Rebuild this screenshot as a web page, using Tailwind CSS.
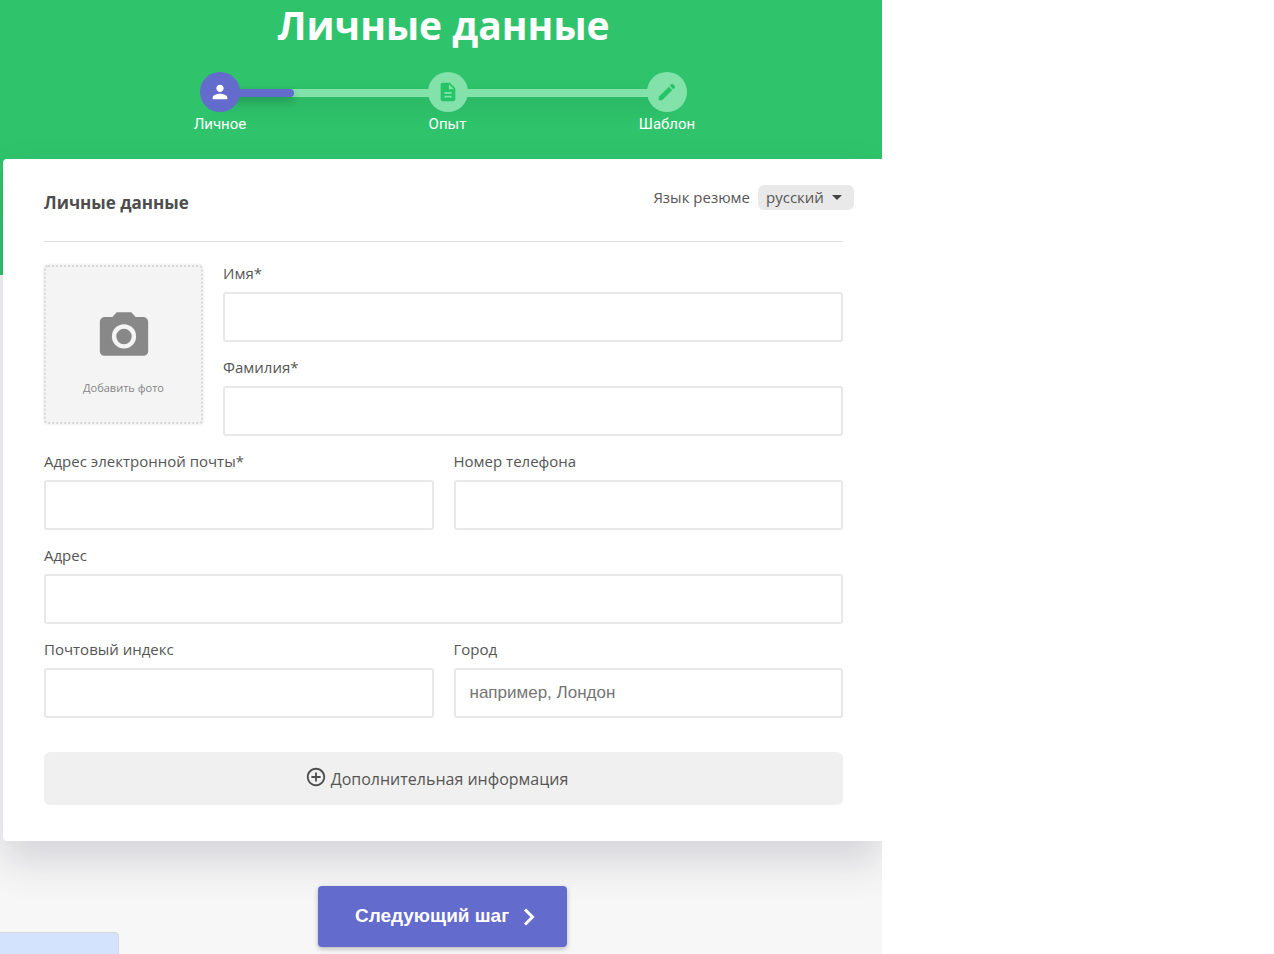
<!DOCTYPE html>
<html lang="ru">
<head>
<meta charset="utf-8">
<meta name="viewport" content="width=device-width, initial-scale=1">
<title>Личные данные</title>
<script src="https://cdn.jsdelivr.net/npm/@tailwindcss/browser@4"></script>
</head>
<body class="bg-white font-['Open_Sans','Noto_Sans',sans-serif] text-[15px] text-[#555]">
<div class="relative min-h-screen w-full max-w-[882px] overflow-hidden bg-[linear-gradient(#2fc46c_275px,#f7f7f7_275px)] pl-[3px] pb-2">
  <header class="flex flex-col items-center pl-0.5 text-white">
    <h1 class="text-[39px] leading-[50px] font-bold">Личные данные</h1>
    <nav class="relative mt-[22px] w-full max-w-[503px]" aria-label="Шаги">
      <div class="absolute inset-x-7 top-[17px] h-2 bg-[#83e2aa] shadow-[0_10px_20px_rgba(0,0,0,0.15)]">
        <div class="h-full w-[74px] rounded-r-full bg-[#636bcd] shadow-[0_4px_8px_rgba(0,0,0,0.2)]"></div>
      </div>
      <ol class="relative flex justify-between font-[Roboto,sans-serif] text-[15px] leading-5">
        <li class="flex w-14 flex-col items-center gap-0.5">
          <span class="flex size-10 items-center justify-center rounded-full bg-[#636bcd]">
            <svg class="size-[22px]" viewBox="0 0 24 24" fill="#fff"><path d="M12 12c2.21 0 4-1.79 4-4s-1.79-4-4-4-4 1.79-4 4 1.79 4 4 4zm0 2c-2.67 0-8 1.34-8 4v2h16v-2c0-2.66-5.33-4-8-4z"/></svg>
          </span>
          <span>Личное</span>
        </li>
        <li class="ml-2 flex w-14 flex-col items-center gap-0.5">
          <span class="flex size-10 items-center justify-center rounded-full bg-[#83e2aa]">
            <svg class="size-[22px]" viewBox="0 0 24 24" fill="#25c467"><path d="M14 2H6c-1.1 0-1.99.9-1.99 2L4 20c0 1.1.89 2 1.99 2H18c1.1 0 2-.9 2-2V8l-6-6zm2 16H8v-2h8v2zm0-4H8v-2h8v2zm-3-5V3.500L18.500 9H13z"/></svg>
          </span>
          <span>Опыт</span>
        </li>
        <li class="flex w-14 flex-col items-center gap-0.5">
          <span class="flex size-10 items-center justify-center rounded-full bg-[#83e2aa]">
            <svg class="size-[22px]" viewBox="0 0 24 24" fill="#25c467"><path d="M3 17.250V21h3.750L17.810 9.940l-3.750-3.750L3 17.250zM20.710 7.040c.39-.39.39-1.020 0-1.410l-2.340-2.340c-.39-.39-1.020-.39-1.410 0l-1.830 1.830 3.750 3.750 1.830-1.830z"/></svg>
          </span>
          <span>Шаблон</span>
        </li>
      </ol>
    </nav>
  </header>

  <form>
    <div class="mt-[25px] rounded-l bg-white pr-[39px] pb-9 pl-[41px] shadow-[0_20px_40px_rgba(30,30,60,0.16)]">
      <div class="flex h-[83px] items-start justify-between border-b border-[#dedede] pt-[26px]">
        <h2 class="pt-1.5 text-[17px] leading-6 font-bold text-[#4d4d4d]">Личные данные</h2>
        <div class="-mr-[11px] flex items-center gap-2">
          <label for="lang">Язык резюме</label>
          <div class="relative">
            <select id="lang" class="block h-[25px] w-24 appearance-none rounded-md bg-[#e9e9e9] pl-2">
              <option>русский</option>
            </select>
            <svg class="pointer-events-none absolute top-2.5 right-3 h-[5px] w-2.5" viewBox="0 0 10 5" fill="#444"><path d="M0 0h10L5 5z"/></svg>
          </div>
        </div>
      </div>

      <div class="mt-5 flex flex-col gap-3.5">
        <div class="flex gap-5">
          <button type="button" class="mt-[3px] flex h-[159px] w-[159px] shrink-0 flex-col items-center rounded border-2 border-dotted border-[#d9d9d9] bg-[#f4f4f4] pt-[38px] text-[11px] leading-4 text-[#858585] shadow-[0_0_3px_rgba(0,0,0,0.12)]">
            <svg class="size-[58px]" viewBox="0 0 24 24" fill="#888"><path d="M9 3L7.170 5H4c-1.100 0-2 .9-2 2v12c0 1.100.9 2 2 2h16c1.100 0 2-.9 2-2V7c0-1.100-.9-2-2-2h-3.170L15 3H9z"/><circle cx="12" cy="13" r="5" fill="#f4f4f4"/><circle cx="12" cy="13" r="3.200"/></svg>
            <span class="mt-[17px]">Добавить фото</span>
          </button>
          <div class="flex grow flex-col gap-3.5">
            <div class="flex flex-col gap-2">
              <label for="first" class="leading-[22px]">Имя*</label>
              <input id="first" type="text" class="h-[50px] w-full rounded-[3px] border-2 border-[#e8e8e8] px-3.5 font-['Liberation_Sans',Arial,sans-serif] text-[17px]">
            </div>
            <div class="flex flex-col gap-2">
              <label for="last" class="leading-[22px]">Фамилия*</label>
              <input id="last" type="text" class="h-[50px] w-full rounded-[3px] border-2 border-[#e8e8e8] px-3.5 font-['Liberation_Sans',Arial,sans-serif] text-[17px]">
            </div>
          </div>
        </div>
        <div class="grid grid-cols-2 gap-5">
          <div class="flex flex-col gap-2">
            <label for="email" class="leading-[22px]">Адрес электронной почты*</label>
            <input id="email" type="email" class="h-[50px] w-full rounded-[3px] border-2 border-[#e8e8e8] px-3.5 font-['Liberation_Sans',Arial,sans-serif] text-[17px]">
          </div>
          <div class="flex flex-col gap-2">
            <label for="phone" class="leading-[22px]">Номер телефона</label>
            <input id="phone" type="tel" class="h-[50px] w-full rounded-[3px] border-2 border-[#e8e8e8] px-3.5 font-['Liberation_Sans',Arial,sans-serif] text-[17px]">
          </div>
        </div>
        <div class="flex flex-col gap-2">
          <label for="address" class="leading-[22px]">Адрес</label>
          <input id="address" type="text" class="h-[50px] w-full rounded-[3px] border-2 border-[#e8e8e8] px-3.5 font-['Liberation_Sans',Arial,sans-serif] text-[17px]">
        </div>
        <div class="grid grid-cols-2 gap-5">
          <div class="flex flex-col gap-2">
            <label for="zip" class="leading-[22px]">Почтовый индекс</label>
            <input id="zip" type="text" class="h-[50px] w-full rounded-[3px] border-2 border-[#e8e8e8] px-3.5 font-['Liberation_Sans',Arial,sans-serif] text-[17px]">
          </div>
          <div class="flex flex-col gap-2">
            <label for="city" class="leading-[22px]">Город</label>
            <input id="city" type="text" placeholder="например, Лондон" class="h-[50px] w-full rounded-[3px] border-2 border-[#e8e8e8] px-3.5 font-['Liberation_Sans',Arial,sans-serif] text-[17px] placeholder:text-[#757575]">
          </div>
        </div>
      </div>

      <button type="button" class="mt-[34px] flex h-[53px] w-full items-center justify-center gap-1 rounded-md bg-[#f0f0f0] pr-3.5 text-base">
        <svg class="mb-1 size-[22px]" viewBox="0 0 24 24" fill="#4d4d4d"><path d="M13 7h-2v4H7v2h4v4h2v-4h4v-2h-4V7zm-1-5C6.480 2 2 6.480 2 12s4.480 10 10 10 10-4.480 10-10S17.520 2 12 2zm0 18c-4.410 0-8-3.590-8-8s3.590-8 8-8 8 3.590 8 8-3.590 8-8 8z"/></svg>
        <span>Дополнительная информация</span>
      </button>
    </div>

    <button type="submit" class="relative mx-auto mt-[45px] flex h-[61px] items-center gap-3.5 rounded bg-[#636bcd] pr-8 pl-[37px] font-['Liberation_Sans',Arial,sans-serif] text-[19px] font-bold text-white shadow-[0_2px_5px_rgba(0,0,0,0.25)]">
      <span>Следующий шаг</span>
      <svg class="h-[18px] w-3" viewBox="0 0 12 18" fill="none" stroke="#fff" stroke-width="3"><path d="M2 1.500L9.500 9 2 16.500"/></svg>
    </button>
  </form>

  <div class="absolute bottom-0 left-0 h-[23px] w-[119px] rounded-tr border-t border-r border-[#d8d8dc] bg-[#d3e3fd]"></div>
</div>
</body>
</html>
